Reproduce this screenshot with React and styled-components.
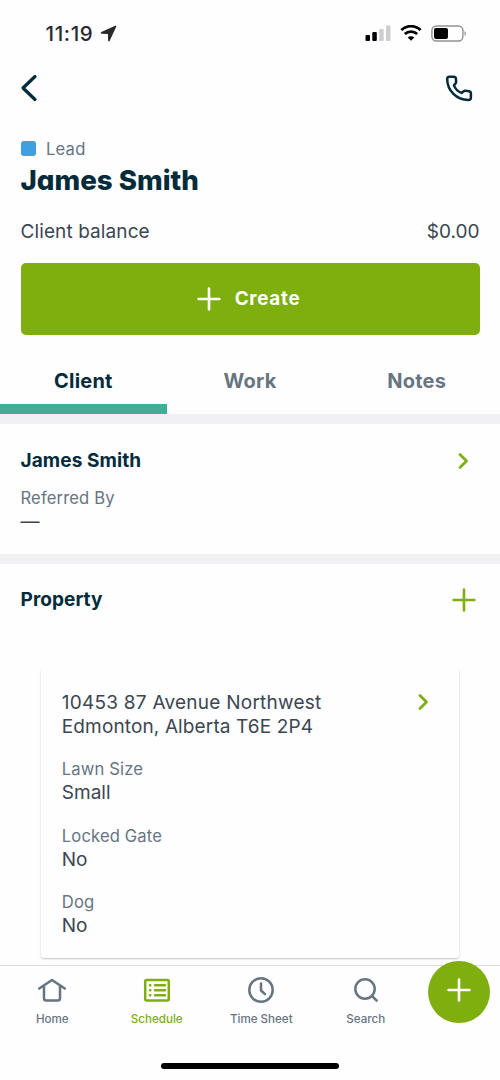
import React from "react";
import styled, { createGlobalStyle } from "styled-components";

const c = {
  bg: "#fefdff",
  navy: "#032b3a",
  body: "#3b4650",
  muted: "#66757f",
  green: "#7eaf0e",
  teal: "#42ad94",
  band: "#f1f0f2",
};

const Global = createGlobalStyle`
  *, *::before, *::after { box-sizing: border-box; }
  body { margin: 0; background: ${c.bg}; font-family: Inter, "Liberation Sans", sans-serif; color: ${c.body}; }
  button { font: inherit; color: inherit; background: none; border: 0; padding: 0; }
  h1, h2, p, dl, dt, dd { margin: 0; }
  svg { display: block; flex: none; }
`;

const Screen = styled.div`
  width: 500px;
  height: 1080px;
  display: flex;
  flex-direction: column;
  overflow: hidden;
`;

const Text = styled.span`
  font-size: ${(p) => p.$size}px;
  line-height: ${(p) => p.$line || 24}px;
  font-weight: ${(p) => p.$weight || 400};
  letter-spacing: ${(p) => p.$track || 0}px;
  color: ${(p) => p.$color || c.body};
  white-space: nowrap;
`;

const StatusBar = styled.div`
  height: 66px;
  padding: 1px 33px 0 45.5px;
  display: flex;
  justify-content: space-between;
  align-items: center;
`;

const StatusGroup = styled.div`
  display: flex;
  align-items: center;
  gap: ${(p) => p.$gap}px;
`;

const NavBar = styled.header`
  height: 44px;
  padding: 0 27px 0 20px;
  display: flex;
  justify-content: space-between;
  align-items: center;
`;

const Summary = styled.section`
  padding: 26px 20.5px 0;
  display: flex;
  flex-direction: column;
`;

const LeadRow = styled.div`
  display: flex;
  align-items: center;
  gap: 10.5px;
  height: 25px;
`;

const LeadSwatch = styled.span`
  width: 15px;
  height: 15px;
  border-radius: 3px;
  background: #409fe0;
`;

const Name = styled.h1`
  margin-top: 2px;
  font-size: 27.7px;
  line-height: 34px;
  font-weight: 800;
  font-feature-settings: "cv11", "ss03";
  color: ${c.navy};
  white-space: nowrap;
`;

const BalanceRow = styled.div`
  margin-top: 22px;
  height: 26px;
  display: flex;
  justify-content: space-between;
  align-items: center;
`;

const CreateButton = styled.button`
  margin-top: 18px;
  height: 72px;
  border-radius: 5px;
  background: ${c.green};
  display: flex;
  align-items: center;
  justify-content: center;
  gap: 14px;
  padding: 0 3px 1px 0;
`;

const Tabs = styled.nav`
  margin-top: 14px;
  height: 65px;
  display: grid;
  grid-template-columns: 1fr 1fr 1fr;
`;

const Tab = styled.button`
  border-bottom: 10px solid ${(p) => (p.$active ? c.teal : "transparent")};
  padding-top: 9px;
`;

const Band = styled.div`
  height: 10px;
  background: ${c.band};
`;

const Section = styled.section`
  height: ${(p) => p.$height}px;
  padding: ${(p) => p.$top}px 21px 0 20.5px;
`;

const SectionHead = styled.div`
  height: 24px;
  display: flex;
  align-items: center;
  justify-content: space-between;
  padding-right: ${(p) => p.$inset}px;
`;

const Field = styled.dl`
  margin-top: ${(p) => p.$top}px;
  display: flex;
  flex-direction: column;
`;

const PropertyCard = styled.article`
  margin: 56px 20px 0 20.5px;
  height: 290px;
  border-radius: 3px;
  background: ${c.bg};
  box-shadow: 0 1px 2px rgba(20, 30, 40, 0.25);
  clip-path: inset(0 -4px -5px -4px);
  padding: 22px 30px 0 20.8px;
`;

const AddressRow = styled.div`
  display: flex;
  justify-content: space-between;
  align-items: flex-start;
`;

const Address = styled.p`
  padding-top: 1px;
  display: flex;
  flex-direction: column;
`;

const ChevronSlot = styled.span`
  padding-top: 3.5px;
`;

const BottomBar = styled.nav`
  height: 115px;
  border-top: 1px solid #dcdbdf;
  display: flex;
  flex-direction: column;
  align-items: center;
  position: relative;
`;

const BarItems = styled.div`
  align-self: flex-start;
  width: 418px;
  display: grid;
  grid-template-columns: repeat(4, 1fr);
`;

const BarItem = styled.button`
  height: 62px;
  padding-top: 10px;
  display: flex;
  flex-direction: column;
  align-items: center;
  gap: 9px;
`;

const AddButton = styled.button`
  position: absolute;
  right: 10px;
  top: -5.5px;
  width: 62px;
  height: 62px;
  border-radius: 50%;
  background: ${c.green};
  display: flex;
  align-items: center;
  justify-content: center;
  padding-bottom: 3px;
`;

const HomeIndicator = styled.span`
  margin-top: 35px;
  width: 178px;
  height: 6px;
  border-radius: 3px;
  background: #000;
`;

const Stroke = ({ w, h, color, width = 2.5, children }) => (
  <svg width={w} height={h} viewBox={`0 0 ${w} ${h}`} fill="none" stroke={color} strokeWidth={width} strokeLinecap="round" strokeLinejoin="round">
    {children}
  </svg>
);

const Plus = ({ color, width = 2.6 }) => (
  <Stroke w={24} h={24} color={color} width={width}>
    <path d="M12 1.6v20.8M1.6 12h20.8" />
  </Stroke>
);

const Chevron = () => (
  <Stroke w={11} h={16} color={c.green} width={2.7}>
    <path d="M2 1.5 8.500 8 2 14.500" />
  </Stroke>
);

const Detail = ({ label, value, top }) => (
  <Field $top={top}>
    <Text as="dt" $size={16.6} $line={23} $track={0.14} $color={c.muted}>{label}</Text>
    <Text as="dd" $size={19} $line={23}>{value}</Text>
  </Field>
);

const icons = {
  Home: (
    <Stroke w={30} h={28} color={c.muted}>
      <path d="M2.200 12.500 15 4l12.800 8.500M7 9.800v12.500a2.300 2.300 0 0 0 2.300 2.300h11.400a2.300 2.300 0 0 0 2.300-2.300V9.800" />
    </Stroke>
  ),
  Schedule: (
    <Stroke w={28} h={28} color={c.green}>
      <rect x="2.200" y="4" width="23.600" height="20.600" rx="1.500" />
      <path d="M12 9.300h10M12 14.300h10M12 19.300h10M7 9.300h.3M7 14.300h.3M7 19.300h.3" />
    </Stroke>
  ),
  "Time Sheet": (
    <Stroke w={28} h={28} color={c.muted}>
      <circle cx="14" cy="14" r="11.700" />
      <path d="M14 7.500v7l4 3.700" />
    </Stroke>
  ),
  Search: (
    <Stroke w={28} h={28} color={c.muted}>
      <circle cx="13" cy="13" r="9.700" />
      <path d="m20 20 4.700 4.700" />
    </Stroke>
  ),
};

export default function App() {
  return (
    <>
      <Global />
      <Screen>
        <StatusBar>
          <StatusGroup $gap={6.5}>
            <Text $size={20.5} $weight={500} $track={0.65} $color="#29282c">11:19</Text>
            <svg width="17" height="17" viewBox="0 0 17 17" fill="#29282c">
              <path d="M15.200.8 1.300 7.100c-.9.400-.7 1.500.3 1.600l6.300.3.200 6.500c0 1 1.200 1.200 1.600.3L16.200 1.800c.3-.7-.3-1.300-1-1Z" />
            </svg>
          </StatusGroup>
          <StatusGroup $gap={9}>
            <svg width="26" height="17" viewBox="0 0 26 17">
              <rect x="0.500" y="10" width="4.500" height="6" rx="1" fill="#000" />
              <rect x="7.300" y="7" width="4.500" height="9" rx="1" fill="#000" />
              <rect x="14.200" y="4" width="4.500" height="12" rx="1" fill="#ceced1" />
              <rect x="21" y=".5" width="4.500" height="15.500" rx="1" fill="#ceced1" />
            </svg>
            <svg width="22" height="17" viewBox="0 0 22 17" fill="none" stroke="#000" strokeWidth="2.800">
              <path d="M1.300 5.100a14 14 0 0 1 19.400 0M4.800 9.100a9 9 0 0 1 12.400 0" />
              <path d="m11 15.700-3.300-3.100a4.700 4.700 0 0 1 6.600 0Z" fill="#000" stroke="none" />
            </svg>
            <svg width="36" height="18" viewBox="0 0 36 18">
              <rect x=".9" y="1" width="31" height="15" rx="4.500" fill="none" stroke="#929195" strokeWidth="1.400" />
              <rect x="3" y="3" width="14" height="11" rx="2" fill="#000" />
              <path d="M33.500 6v5c1.800-.7 1.800-4.300 0-5Z" fill="#929195" />
            </svg>
          </StatusGroup>
        </StatusBar>

        <NavBar>
          <Stroke w={20} h={28} color={c.navy} width={3.2}>
            <path d="M15 2.500 3 14l12 11.500" />
          </Stroke>
          <Stroke w={28} h={28} color={c.navy} width={2.5}>
            <path d="M4.300 2.700h4.400c1.200 0 2 .6 2.200 1.700l.2 3.100c.1 1-.2 1.700-.9 2.400l-1.300 1.500c1.400 3.500 4 6.100 7.600 7.500l1.900-1.500c.8-.6 1.600-.8 2.600-.6l3 .5c1.200.2 1.900 1 1.900 2.200v4c0 1.600-1 2.500-2.600 2.500C11.700 25.900 2.200 16.800 2.200 5.100c0-1.500.8-2.400 2.100-2.400Z" />
          </Stroke>
        </NavBar>

        <Summary>
          <LeadRow>
            <LeadSwatch />
            <Text $size={16.6} $track={0.2} $color={c.muted}>Lead</Text>
          </LeadRow>
          <Name>James Smith</Name>
          <BalanceRow>
            <Text $size={19} $track={0.1}>Client balance</Text>
            <Text $size={19}>$0.00</Text>
          </BalanceRow>
          <CreateButton>
            <Plus color="#fff" />
            <Text $size={18.8} $weight={700} $track={0.75} $color="#fff">Create</Text>
          </CreateButton>
        </Summary>

        <Tabs>
          <Tab $active><Text $size={20} $weight={700} $track={0.2} $color={c.navy}>Client</Text></Tab>
          <Tab><Text $size={20} $weight={700} $track={0.2} $color={c.muted}>Work</Text></Tab>
          <Tab><Text $size={20} $weight={700} $track={0.2} $color={c.muted}>Notes</Text></Tab>
        </Tabs>
        <Band />

        <Section $height={130} $top={24.5}>
          <SectionHead $inset={10}>
            <Text as="h2" $size={19} $weight={700} $track={0.1} $color={c.navy}>James Smith</Text>
            <Chevron />
          </SectionHead>
          <Detail label="Referred By" value="—" top={14.5} />
        </Section>
        <Band />

        <Section $height={401} $top={24}>
          <SectionHead $inset={3}>
            <Text as="h2" $size={19} $weight={700} $track={0.08} $color={c.navy}>Property</Text>
            <Plus color={c.green} />
          </SectionHead>
          <PropertyCard>
            <AddressRow>
              <Address>
                <Text $size={19} $track={0.24}>10453 87 Avenue Northwest</Text>
                <Text $size={19} $track={0.13}>Edmonton, Alberta T6E 2P4</Text>
              </Address>
              <ChevronSlot><Chevron /></ChevronSlot>
            </AddressRow>
            <Detail label="Lawn Size" value="Small" top={19} />
            <Detail label="Locked Gate" value="No" top={20.5} />
            <Detail label="Dog" value="No" top={20.5} />
          </PropertyCard>
        </Section>

        <BottomBar>
          <BarItems>
            {Object.entries(icons).map(([label, icon]) => (
              <BarItem key={label}>
                {icon}
                <Text $size={11.6} $line={12} $weight={500} $color={label === "Schedule" ? c.green : c.muted}>{label}</Text>
              </BarItem>
            ))}
          </BarItems>
          <HomeIndicator />
          <AddButton aria-label="Add"><Plus color="#fff" /></AddButton>
        </BottomBar>
      </Screen>
    </>
  );
}
